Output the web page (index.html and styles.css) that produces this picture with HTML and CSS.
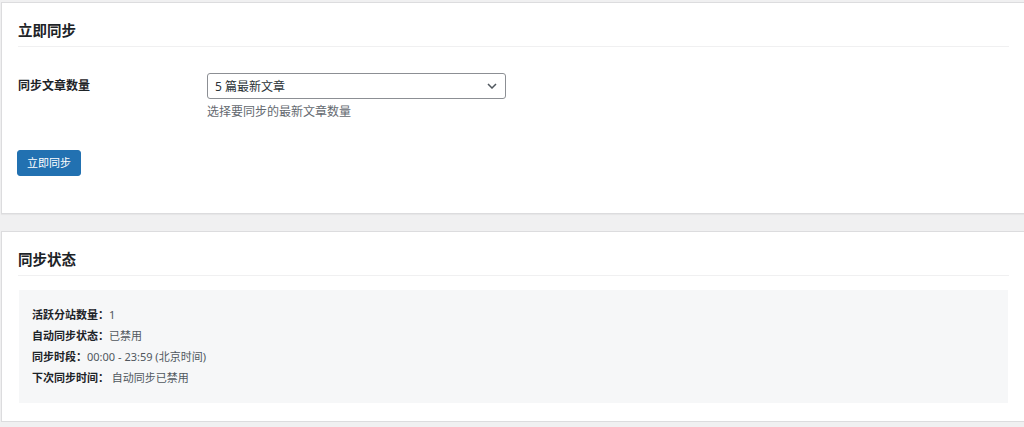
FILE: index.html
```html
<!DOCTYPE html>
<html lang="zh-CN">
<head>
<meta charset="utf-8">
<title>同步</title>
<link rel="stylesheet" href="styles.css">
</head>
<body>
<div class="page">
  <section class="card card-sync">
    <h2 class="card-title">立即同步</h2>
    <div class="form-row">
      <div class="form-label">同步文章数量</div>
      <div class="form-field">
        <div class="select">
          <span class="select-value">5 篇最新文章</span>
          <svg class="chevron" width="10" height="6" viewBox="0 0 10 6"><polyline points="1,1 5,5 9,1" fill="none" stroke="#50575e" stroke-width="1.5"/></svg>
        </div>
        <p class="help">选择要同步的最新文章数量</p>
      </div>
    </div>
    <button class="btn">立即同步</button>
  </section>

  <section class="card card-status">
    <h2 class="card-title">同步状态</h2>
    <div class="status-box">
      <div class="status-line"><b>活跃分站数量：</b>1</div>
      <div class="status-line"><b>自动同步状态：</b>已禁用</div>
      <div class="status-line"><b>同步时段：</b>00:00 - 23:59 (北京时间)</div>
      <div class="status-line"><b>下次同步时间：</b> 自动同步已禁用</div>
    </div>
  </section>
</div>
</body>
</html>
```

FILE: styles.css
```css
* { box-sizing: border-box; }
html, body {
  margin: 0;
  padding: 0;
  background: #f0f0f1;
  overflow: hidden;
}
body {
  font-family: "Noto Sans", "Noto Sans CJK SC", sans-serif;
  color: #1d2327;
}
.page {
  padding-top: 2px;
  display: flex;
  flex-direction: column;
  gap: 17px;
}
.card {
  margin-left: 1px;
  width: 1024px;
  background: #fff;
  border: 1px solid #dcdcde;
  box-shadow: 0 1px 1px rgba(0,0,0,0.04);
  padding: 0 16px;
}
.card-sync { height: 212px; }
.card-status { height: 191px; }
.card-title {
  margin: 17px 0 0;
  padding-bottom: 6px;
  font-size: 14.5px;
  line-height: 20px;
  font-weight: 700;
  color: #1d2327;
  border-bottom: 1px solid #f0f0f1;
  width: 991px;
}
.form-row {
  display: flex;
  margin-top: 26px;
}
.form-label {
  width: 189px;
  font-size: 12px;
  font-weight: 700;
  line-height: 26px;
}
.select {
  width: 299px;
  height: 26px;
  border: 1px solid #8c8f94;
  border-radius: 3px;
  display: flex;
  align-items: center;
  justify-content: space-between;
  padding: 0 8px 0 7px;
  font-size: 12px;
  color: #2c3338;
}
.chevron { display: block; }
.help {
  margin: 4px 0 0;
  font-size: 12px;
  line-height: 18px;
  color: #646970;
}
.btn {
  margin-top: 29px;
  margin-left: -1px;
  height: 26px;
  padding: 0 9px;
  background: #2271b1;
  border: 1px solid #2271b1;
  border-radius: 3px;
  color: #fff;
  font-family: inherit;
  font-size: 11px;
  line-height: 24px;
  display: block;
}
.status-box {
  margin-top: 14px;
  width: 989px;
  margin-left: 1px;
  background: #f6f7f8;
  padding: 14px 13px 15px;
  height: 113px;
}
.status-line {
  font-size: 11px;
  line-height: 21px;
  color: #50575e;
}
.status-line b {
  color: #1d2327;
  font-weight: 700;
}
```
